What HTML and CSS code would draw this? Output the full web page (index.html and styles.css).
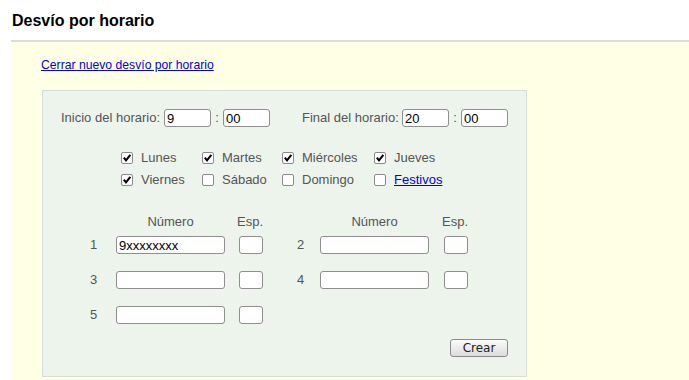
FILE: index.html
```html
<!DOCTYPE html>
<html lang="es">
<head>
<meta charset="utf-8">
<title>Desvío por horario</title>
<link rel="stylesheet" href="styles.css">
</head>
<body>
<header class="page-head">
  <h1 class="title">Desvío por horario</h1>
</header>
<main class="content">
  <p class="close-link"><a href="#">Cerrar nuevo desvío por horario</a></p>
  <form class="panel">
    <div class="time-row">
      <label class="time-label start">Inicio del horario:</label>
      <input class="field time" type="text" value="9"><span class="colon">:</span><input class="field time" type="text" value="00">
      <label class="time-label end">Final del horario:</label>
      <input class="field time" type="text" value="20"><span class="colon">:</span><input class="field time" type="text" value="00">
    </div>

    <div class="days">
      <label class="day"><span class="cb"><svg viewBox="0 0 12 12"><path d="M2.2 5.6 L4.8 8.8 L10 2.2"/></svg></span>Lunes</label>
      <label class="day"><span class="cb"><svg viewBox="0 0 12 12"><path d="M2.2 5.6 L4.8 8.8 L10 2.2"/></svg></span>Martes</label>
      <label class="day"><span class="cb"><svg viewBox="0 0 12 12"><path d="M2.2 5.6 L4.8 8.8 L10 2.2"/></svg></span>Miércoles</label>
      <label class="day"><span class="cb"><svg viewBox="0 0 12 12"><path d="M2.2 5.6 L4.8 8.8 L10 2.2"/></svg></span>Jueves</label>
      <label class="day"><span class="cb"><svg viewBox="0 0 12 12"><path d="M2.2 5.6 L4.8 8.8 L10 2.2"/></svg></span>Viernes</label>
      <label class="day"><span class="cb"></span>Sábado</label>
      <label class="day"><span class="cb"></span>Domingo</label>
      <label class="day"><span class="cb"></span><a href="#">Festivos</a></label>
    </div>

    <div class="numbers">
      <span></span>
      <span class="head num-head">Número</span>
      <span class="head esp-head">Esp.</span>
      <span></span>
      <span class="head num-head">Número</span>
      <span class="head esp-head">Esp.</span>

      <span class="idx">1</span>
      <input class="field num" type="text" value="9xxxxxxxx">
      <input class="field esp" type="text">
      <span class="idx right">2</span>
      <input class="field num" type="text">
      <input class="field esp" type="text">

      <span class="idx">3</span>
      <input class="field num" type="text">
      <input class="field esp" type="text">
      <span class="idx right">4</span>
      <input class="field num" type="text">
      <input class="field esp" type="text">

      <span class="idx">5</span>
      <input class="field num" type="text">
      <input class="field esp" type="text">
    </div>

    <div class="actions">
      <button class="btn" type="button">Crear</button>
    </div>
  </form>
</main>
</body>
</html>
```

FILE: styles.css
```css
html, body {
  margin: 0;
  padding: 0;
  background: #ffffff;
}

body {
  font-family: "Liberation Sans", Arial, sans-serif;
  font-size: 13px;
  color: #555555;
  overflow: hidden;
}

a {
  color: #0000ee;
  text-decoration: underline;
}

.page-head {
  margin-left: 11px;
  padding: 11px 0 0 1px;
  height: 29px;
  border-bottom: 2px solid #dddddd;
}

.title {
  margin: 0;
  font-size: 16px;
  line-height: 19px;
  font-weight: bold;
  color: #000000;
}

.content {
  margin-left: 11px;
  padding: 16px 0 3px 30px;
  background: #ffffe6;
}

.close-link {
  margin: 0;
  font-size: 12.2px;
  line-height: 14px;
}

.panel {
  box-sizing: border-box;
  width: 485px;
  margin: 18px 0 0 1px;
  padding: 18px 18px 19px 18px;
  background: #ecf4ec;
  border: 1px solid #d8ddd8;
}

.time-row {
  display: flex;
  align-items: center;
  height: 18px;
}

.time-label {
  line-height: 18px;
}

.time-label.start {
  width: 103px;
}

.time-label.end {
  width: 100px;
  margin-left: 32px;
}

.colon {
  width: 12px;
  text-align: center;
  line-height: 18px;
}

.field {
  box-sizing: border-box;
  height: 18px;
  margin: 0;
  padding: 0 2px;
  border: 1px solid #8e8e8e;
  border-radius: 3px;
  background: #ffffff;
  font-family: "Liberation Sans", Arial, sans-serif;
  font-size: 13px;
  color: #000000;
  outline: none;
}

.field.time {
  width: 47px;
}

.field.num {
  width: 109px;
}

.field.esp {
  width: 24px;
  justify-self: end;
}

.days {
  display: grid;
  grid-template-columns: 81px 80px 92px auto;
  grid-auto-rows: 22px;
  align-items: center;
  margin: 20px 0 0 60px;
}

.day {
  display: flex;
  align-items: center;
  line-height: 22px;
}

.cb {
  box-sizing: border-box;
  width: 12px;
  height: 12px;
  margin-right: 8px;
  border: 1px solid #8a8a8a;
  border-radius: 2px;
  background: #ffffff;
  display: flex;
  align-items: center;
  justify-content: center;
  flex: none;
}

.cb svg {
  width: 10px;
  height: 10px;
  overflow: visible;
}

.cb path {
  fill: none;
  stroke: #000000;
  stroke-width: 2.5;
  stroke-linecap: butt;
  stroke-linejoin: miter;
}

.numbers {
  display: grid;
  grid-template-columns: 26px 109px 38px 57px 109px 39px;
  grid-template-rows: 22px 35px 35px 18px;
  align-items: start;
  margin: 23px 0 0 29px;
}

.head {
  line-height: 16px;
}

.num-head {
  text-align: center;
}

.esp-head {
  justify-self: end;
}

.idx {
  line-height: 18px;
}

.idx.right {
  padding-left: 34px;
}

.actions {
  display: flex;
  justify-content: flex-end;
  margin-top: 15px;
}

.btn {
  box-sizing: border-box;
  width: 58px;
  height: 18px;
  margin: 0;
  padding: 0;
  border: 1px solid #8a8a8a;
  border-radius: 3px;
  background: linear-gradient(#fbfbfb, #dcdcdc);
  font-family: "DejaVu Sans", sans-serif;
  font-size: 12px;
  line-height: 16px;
  color: #222222;
}
```
